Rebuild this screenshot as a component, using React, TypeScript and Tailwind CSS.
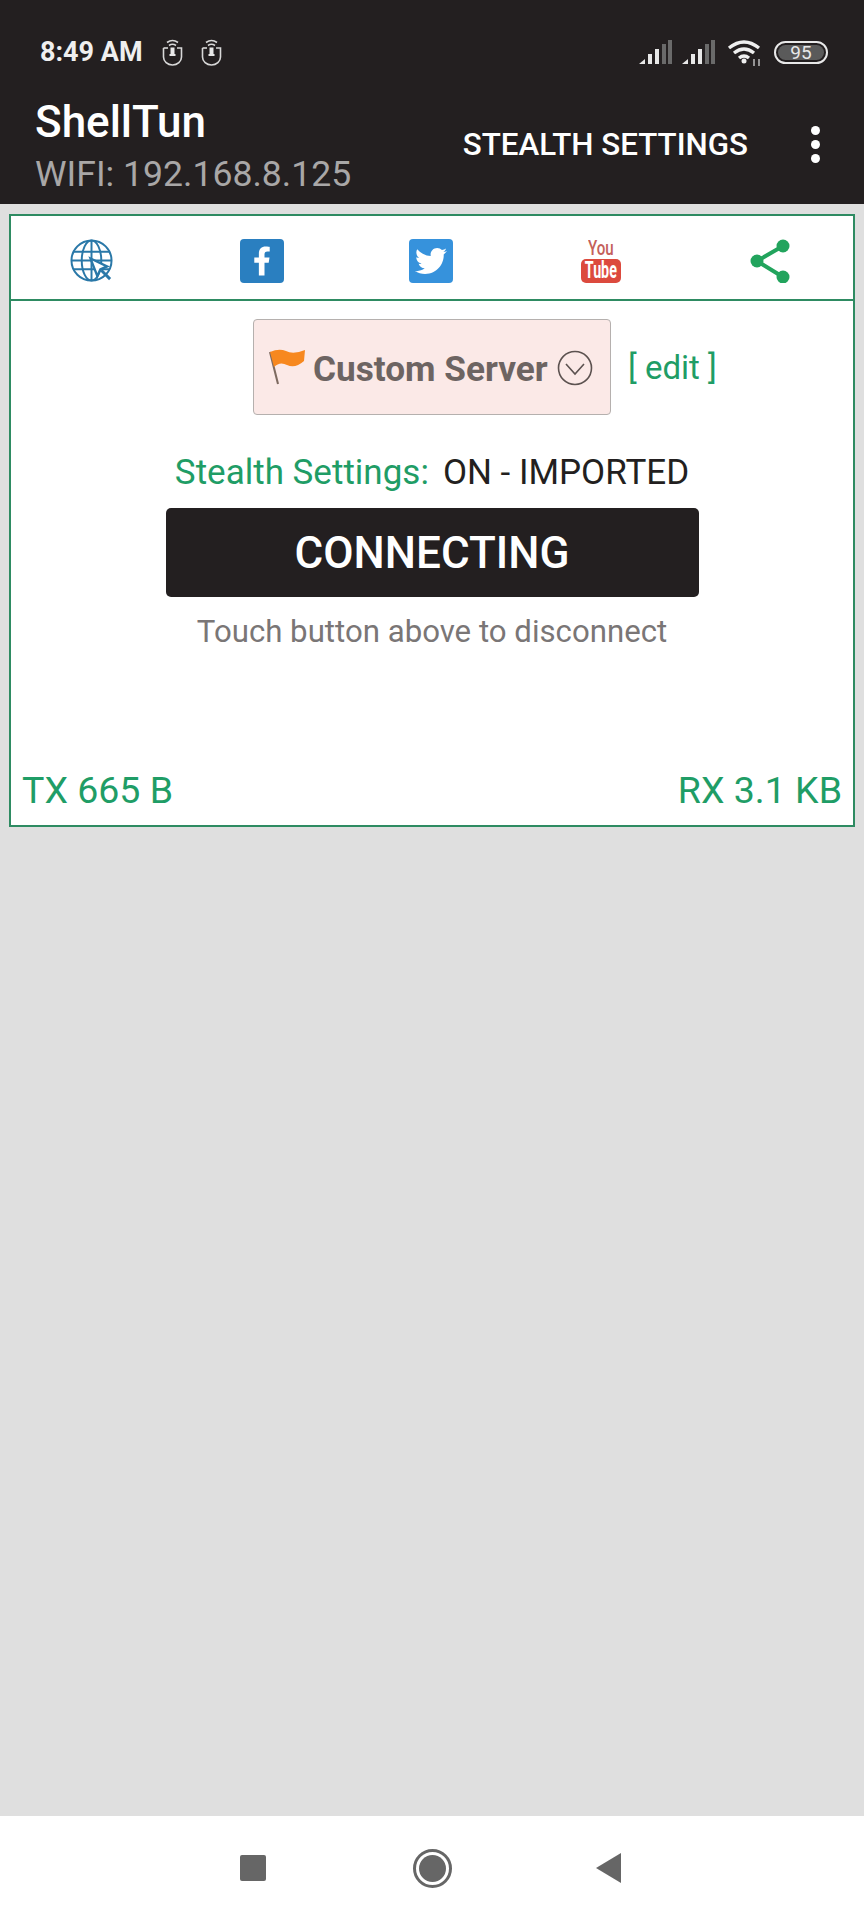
import { FaFacebookF, FaTwitter } from "react-icons/fa";

const font = { fontFamily: "Roboto, sans-serif" };

function SignalBars() {
  return (
    <svg width="34" height="24" viewBox="0 0 34 24">
      <path d="M0 24 L6 19 V24 Z" fill="#e8e8e8" />
      <rect x="9" y="14" width="4" height="10" fill="#e8e8e8" />
      <rect x="16" y="9" width="4" height="15" fill="#e8e8e8" />
      <rect x="23" y="4" width="4" height="20" fill="#6a6a6a" />
      <rect x="29" y="0" width="4" height="24" fill="#6a6a6a" />
    </svg>
  );
}

function MouseIcon() {
  return (
    <svg width="21" height="27" viewBox="0 0 21 27" fill="none" stroke="#d8d8d8">
      <path d="M1.5 9 V18 A9 8 0 0 0 19.5 18 V9 H15" strokeWidth="1.6" />
      <path d="M6 9 H1.5" strokeWidth="1.6" />
      <path d="M5 3.5 Q10.5 -0.5 16 3.5" strokeWidth="1.6" />
      <path d="M7 6.5 Q10.5 4 14 6.5" strokeWidth="1.6" />
      <rect x="8.5" y="8.5" width="4" height="7" fill="#e8e8e8" stroke="none" />
      <rect x="7.5" y="15" width="6" height="2" fill="#e8e8e8" stroke="none" />
    </svg>
  );
}

function WifiIcon() {
  return (
    <svg width="36" height="27" viewBox="0 0 36 27" fill="none" stroke="#efefef" strokeWidth="3.4">
      <path d="M2 9 Q17 -3 32 9" />
      <path d="M7 14 Q17 6 27 14" />
      <path d="M12 19 Q17 15 22 19" />
      <circle cx="17" cy="22" r="2.5" fill="#efefef" stroke="none" />
      <path d="M27 20 V27 M32 20 V27" strokeWidth="1.5" stroke="#bbbbbb" />
    </svg>
  );
}

function GlobeIcon() {
  return (
    <svg width="44" height="44" viewBox="0 0 45 45" fill="none" stroke="#2a78a8" strokeWidth="2">
      <circle cx="22" cy="22" r="20.5" />
      <ellipse cx="22" cy="22" rx="10" ry="20.5" />
      <path d="M22 1.5 V42.5 M3.5 13 H40.5 M1.5 22 H42.5 M3.5 31 H40.5" />
      <path d="M21 20 L38 28 L31 31 L28 38 Z" fill="#ffffff" strokeWidth="2.4" />
      <path d="M32 32 L41 41" strokeWidth="3" />
    </svg>
  );
}

function ShareIcon() {
  return (
    <svg width="40" height="44" viewBox="0 0 40 44" fill="#22a45d" stroke="#22a45d">
      <path d="M33 7 L7 22 L33 38" fill="none" strokeWidth="4" />
      <circle cx="33" cy="7" r="6.5" stroke="none" />
      <circle cx="7" cy="22" r="6.5" stroke="none" />
      <circle cx="33" cy="38" r="6.5" stroke="none" />
    </svg>
  );
}

function FlagIcon() {
  return (
    <svg width="38" height="38" viewBox="0 0 38 38">
      <path d="M1 4 L9 36" stroke="#7d6a60" strokeWidth="2" />
      <path d="M1 4 Q10 0 17 3 Q24 7 36 2 L35 13 Q26 21 18 17 Q11 13 5 19 Z" fill="#f7881f" />
    </svg>
  );
}

function ChevronCircle() {
  return (
    <svg width="36" height="36" viewBox="0 0 36 36" fill="none" stroke="#5c5250" strokeWidth="1.6">
      <circle cx="18" cy="18" r="16.5" />
      <path d="M9 14 L18 24 L27 14" />
    </svg>
  );
}

export default function App() {
  return (
    <div className="h-[1920px] w-[864px] flex flex-col bg-[#dfdfdf]" style={font}>
      {/* HEADER */}
      <header className="h-[204px] bg-[#231f20] text-white">
        <div className="h-[84px] pt-[38px] pl-[40px] pr-[36px] flex items-start justify-between">
          <div className="flex items-center h-[28px]">
            <span className="text-[27px] leading-[28px] font-bold text-[#efefef]">8:49 AM</span>
            <span className="ml-[19px] flex gap-[18px]">
              <MouseIcon />
              <MouseIcon />
            </span>
          </div>
          <div className="flex items-center gap-[9px] h-[28px]">
            <SignalBars />
            <SignalBars />
            <span className="ml-[2px]">
              <WifiIcon />
            </span>
            <span className="ml-[2px] w-[54px] h-[23px] rounded-full border-2 border-[#e8e8e8] p-[2px] flex">
              <span className="w-full rounded-full bg-[#5a5a5a] text-[19px] leading-[15px] text-center text-[#e8e8e8]">
                95
              </span>
            </span>
          </div>
        </div>
        <div className="h-[120px] pl-[35px] pr-[44px] flex items-center justify-between">
          <div className="flex flex-col pt-[4px]">
            <span className="text-[44px] leading-[48px] font-medium">ShellTun</span>
            <span className="text-[35.6px] leading-[40px] mt-[8px] text-[#a9a7a7]">WIFI: 192.168.8.125</span>
          </div>
          <div className="flex items-center">
            <span className="mt-[2px] text-[31.3px] leading-[36px] font-medium">STEALTH SETTINGS</span>
            <span className="ml-[63px] flex flex-col gap-[5px]">
              <span className="w-[9px] h-[9px] rounded-full bg-white" />
              <span className="w-[9px] h-[9px] rounded-full bg-white" />
              <span className="w-[9px] h-[9px] rounded-full bg-white" />
            </span>
          </div>
        </div>
      </header>

      {/* PANEL */}
      <main className="flex-1 pt-[10px] px-[9px]">
        <div className="h-[613px] border-2 border-[#2e8b62] bg-white flex flex-col">
          <div className="h-[85px] pt-[7px] pl-[59px] pr-[61px] flex justify-between items-center border-b-2 border-[#2e8b62]">
            <div className="w-[44px] flex justify-center">
              <GlobeIcon />
            </div>
            <div className="w-[44px] h-[44px] rounded-[4px] bg-[#2a7fc0] flex items-center justify-center">
              <FaFacebookF className="text-white w-[18px] h-[30px]" />
            </div>
            <div className="w-[44px] h-[44px] rounded-[4px] bg-[#3692dc] flex items-center justify-center">
              <FaTwitter className="text-white w-[32px] h-[32px]" />
            </div>
            <div className="w-[44px] h-[44px] flex flex-col items-center">
              <span className="text-[21px] leading-[19px] h-[19px] text-[#c4605a] font-medium scale-x-[0.72]">You</span>
              <span className="mt-[1px] w-[40px] h-[24px] rounded-[5px] bg-[#dc4a3e] text-white flex items-center justify-center text-[23px] leading-[24px] font-bold">
                <span className="scale-x-[0.62]">Tube</span>
              </span>
            </div>
            <div className="w-[44px] flex justify-center">
              <ShareIcon />
            </div>
          </div>

          <div className="flex-1 flex flex-col items-center relative pt-[18px]">
            <div className="relative w-full flex justify-center">
              <div className="w-[358px] h-[96px] rounded-[4px] border border-[#b5b0ae] bg-[#fbe9e7] flex items-center pl-[15px]">
                <FlagIcon />
                <span className="ml-[6px] mt-[4px] text-[35.2px] leading-[40px] font-bold text-[#6d6462]">Custom Server</span>
                <span className="ml-[9px] mt-[2px]">
                  <ChevronCircle />
                </span>
              </div>
              <span className="absolute left-[617px] top-[31px] text-[33px] leading-[36px] text-[#1f9d66]">[ edit ]</span>
            </div>

            <div className="mt-[38px] h-[40px] flex items-center">
              <span className="text-[35px] leading-[40px] text-[#1f9d66]">Stealth Settings:</span>
              <span className="ml-[14px] text-[35px] leading-[40px] text-[#231f20]">ON - IMPORTED</span>
            </div>

            <div className="mt-[15px] w-[533px] h-[89px] rounded-[5px] bg-[#231f20] flex items-center justify-center">
              <span className="text-[44px] leading-[48px] font-medium text-white">CONNECTING</span>
            </div>

            <div className="mt-[16px] text-[31.2px] leading-[38px] text-[#7a7676]">Touch button above to disconnect</div>

            <div className="mt-auto w-full px-[11px] pb-[15px] flex justify-between text-[37.5px] leading-[40px] text-[#1f9d66]">
              <span>TX 665 B</span>
              <span>RX 3.1 KB</span>
            </div>
          </div>
        </div>
      </main>

      {/* NAV */}
      <nav className="h-[104px] bg-white flex items-center pl-[240px]">
        <div className="w-[26px] h-[26px] rounded-[2px] bg-[#666666]" />
        <div className="ml-[147px] w-[39px] h-[39px] rounded-full border-[3px] border-[#666666] flex items-center justify-center">
          <div className="w-[27px] h-[27px] rounded-full bg-[#666666]" />
        </div>
        <svg className="ml-[144px]" width="25" height="30" viewBox="0 0 25 30">
          <path d="M0 15 L25 0 V30 Z" fill="#666666" />
        </svg>
      </nav>
    </div>
  );
}
